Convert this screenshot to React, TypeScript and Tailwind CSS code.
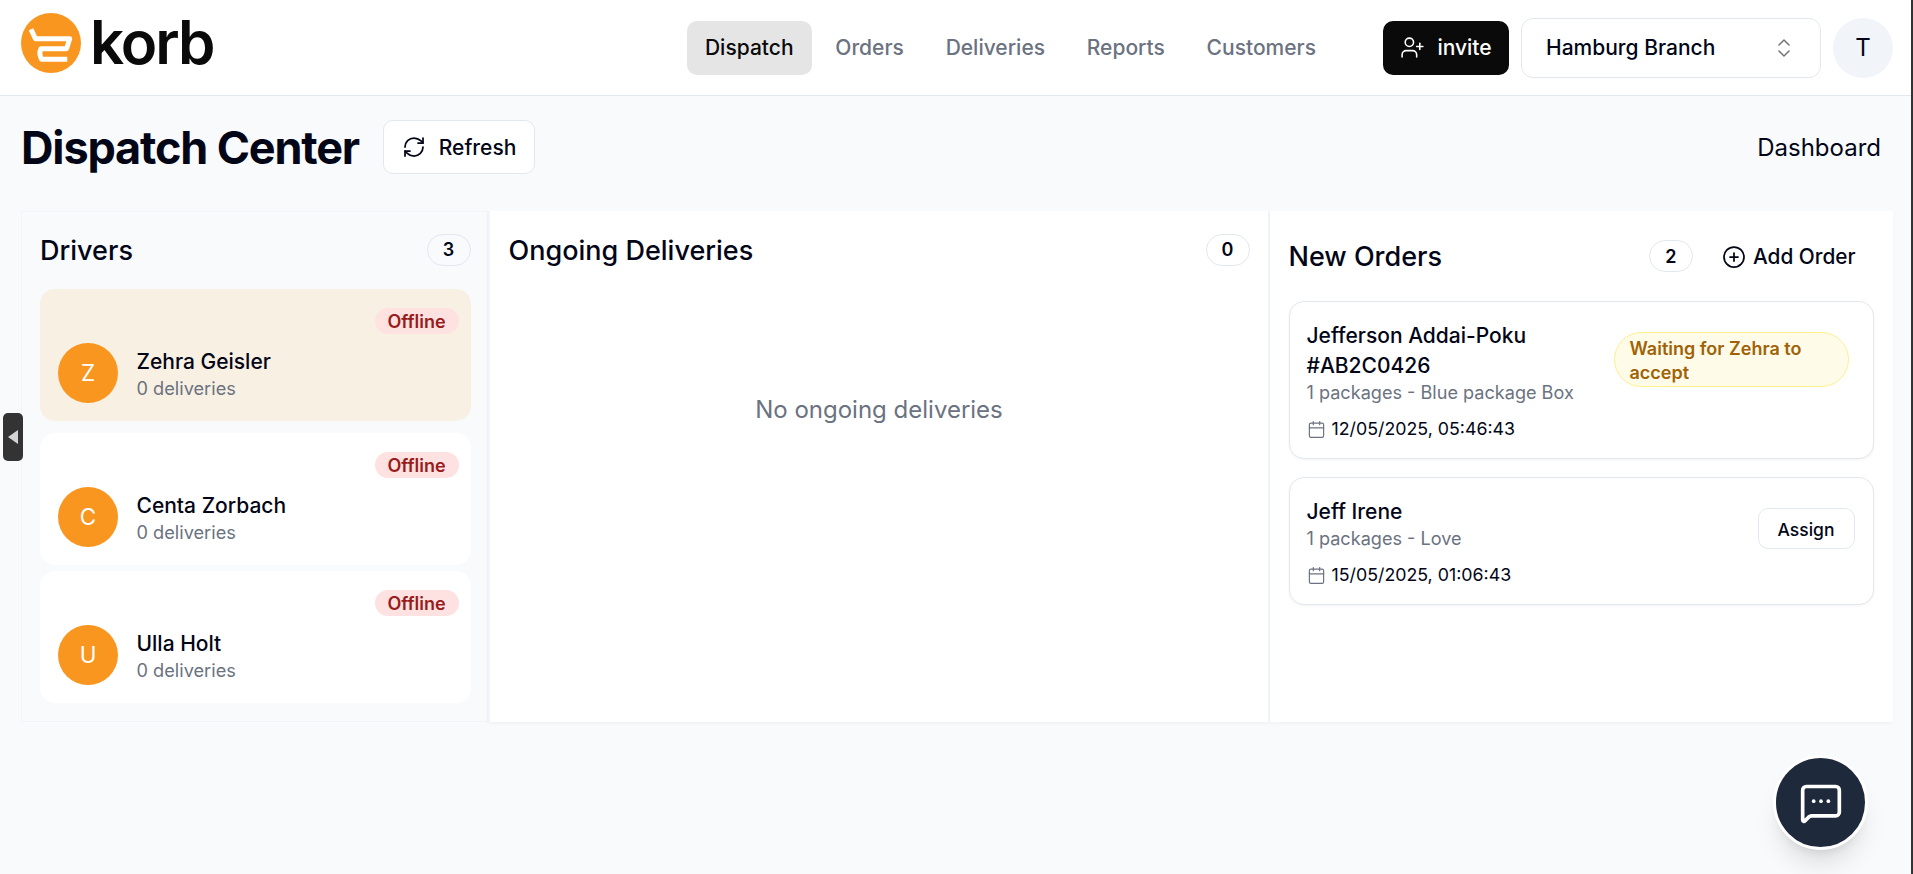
import React from "react";
import { UserPlus, ChevronsUpDown, RefreshCw, CirclePlus, Calendar, MessageSquareMore } from "lucide-react";

const navItems = ["Orders", "Deliveries", "Reports", "Customers"];

function Logo() {
  return (
    <div className="mb-[10px] flex items-center">
      <svg width="60" height="60" viewBox="0 0 192 192">
        <circle cx="96" cy="96" r="96" fill="#f9961f" />
        <path d="M32 52 L46 82 L156 82 L146 114 L64 114 Q56 130 66 148 L148 148" fill="none" stroke="#fff" strokeWidth="16" strokeLinejoin="round" />
      </svg>
      <span className="ml-[9px] mt-[-2px] text-[60px] leading-[60px] font-semibold tracking-[-2px] text-[#0a0a0a]">korb</span>
    </div>
  );
}

function Count({ n }: { n: number }) {
  return (
    <span className="flex h-[32px] w-[44px] items-center justify-center rounded-full border border-[#e2e8f0] text-[18px] font-semibold text-[#020617]">
      {n}
    </span>
  );
}

function Driver({ initial, name, active, className }: { initial: string; name: string; active?: boolean; className?: string }) {
  return (
    <div className={`h-[132px] rounded-[15px] pt-[19px] pl-[18px] pr-[12px] ${active ? "bg-[#f8f0e3]" : "bg-white"} ${className ?? ""}`}>
      <div className="flex justify-end">
        <span className="flex h-[26px] w-[84px] items-center justify-center rounded-full bg-[#fee2e2] pt-[2px] text-[18px] font-semibold text-[#991b1b]">Offline</span>
      </div>
      <div className="mt-[9px] flex items-center">
        <div className="flex h-[60px] w-[60px] items-center justify-center rounded-full bg-[#f9961f] text-[22.5px] text-white">{initial}</div>
        <div className="ml-[18.5px] mt-[2px]">
          <div className="pt-[1.5px] text-[21px] leading-[28px] font-medium text-[#020617]">{name}</div>
          <div className="mt-[-1.5px] text-[18.2px] leading-[26px] text-[#6b7280]">0 deliveries</div>
        </div>
      </div>
    </div>
  );
}

function DateRow({ text }: { text: string }) {
  return (
    <div className="flex h-[24px] items-center text-[17.8px] text-[#020617]">
      <Calendar size={19} strokeWidth={1.5} className="mr-[6px] text-[#6b7280]" />
      {text}
    </div>
  );
}

export default function App() {
  return (
    <div className="flex h-[874px] overflow-hidden bg-[#f8fafc] font-['Inter',sans-serif]">
      <div className="relative min-w-0 flex-1">
        <header className="flex h-[96px] items-center border-b border-[#e2e8f0] bg-white pl-[21px] pr-[18px]">
          <Logo />
          <nav className="ml-auto flex items-center gap-[5.75px] text-[21px] font-medium text-[#6b7280]">
            <span className="flex h-[54px] items-center rounded-[10px] bg-[#e5e5e5] px-[18px] text-[#0a0a0a]">Dispatch</span>
            {navItems.map((n) => (
              <span key={n} className="flex h-[54px] items-center px-[18px]">{n}</span>
            ))}
          </nav>
          <div className="ml-[49px] flex items-center">
            <button className="flex h-[54px] w-[126px] items-center justify-center gap-[12px] rounded-[10px] bg-[#0a0a0a] text-[21px] font-medium text-white">
              <UserPlus size={25} strokeWidth={1.5} />
              invite
            </button>
            <button className="ml-[12px] flex h-[60px] w-[300px] items-center justify-between rounded-[12px] border border-[#e2e8f0] bg-white pl-[24px] pr-[24px] text-[21px] font-medium text-[#020617]">
              Hamburg Branch
              <ChevronsUpDown size={24} strokeWidth={1.5} className="text-[#737373]" />
            </button>
            <div className="ml-[12px] flex h-[60px] w-[60px] items-center justify-center rounded-full bg-[#f1f5f9] text-[24px] text-[#020617]">T</div>
          </div>
        </header>

        <div className="mt-[24px] flex h-[54px] items-center pl-[21px] pr-[30px]">
          <h1 className="mt-[2px] text-[45px] leading-[54px] font-bold tracking-[-1.15px] text-[#020617]">Dispatch Center</h1>
          <button className="ml-[24px] flex h-[54px] w-[152px] items-center justify-center gap-[13px] rounded-[10px] border border-[#e2e8f0] bg-white text-[21px] font-medium text-[#020617]">
            <RefreshCw size={24} strokeWidth={1.75} />
            <span className="mt-[1px]">Refresh</span>
          </button>
          <span className="ml-auto mt-[1px] text-[24px] text-[#020617]">Dashboard</span>
        </div>

        <div className="ml-[21px] mr-[18.5px] mt-[36.5px] flex h-[511px]">
          <section className="w-[467px] border border-[#f1f5f9] pl-[18px] pr-[16.5px] pt-[22px]">
            <div className="flex h-[32px] items-center justify-between">
              <h2 className="mt-[3px] text-[27px] font-medium text-[#020617]">Drivers</h2>
              <Count n={3} />
            </div>
            <div className="mt-[23px]">
              <Driver initial="Z" name="Zehra Geisler" active className="mb-[12px]" />
              <Driver initial="C" name="Centa Zorbach" className="mb-[6px]" />
              <Driver initial="U" name="Ulla Holt" />
            </div>
          </section>

          <section className="w-[781.5px] border-x-[2px] border-[#f1f5f9] bg-white pl-[18.5px] pr-[18px] pt-[23px] shadow-[0_2px_3px_rgba(15,23,42,0.03)]">
            <div className="flex h-[32px] items-center justify-between">
              <h2 className="mt-[3px] text-[27px] font-medium text-[#020617]">Ongoing Deliveries</h2>
              <Count n={0} />
            </div>
            <p className="mt-[128px] text-center text-[24px] leading-[32px] text-[#6b7280]">No ongoing deliveries</p>
          </section>

          <section className="min-w-0 flex-1 bg-white px-[19px] pt-[29.5px] shadow-[0_2px_3px_rgba(15,23,42,0.03)]">
            <div className="flex h-[32px] items-center">
              <h2 className="mt-[3px] text-[27px] font-medium text-[#020617]">New Orders</h2>
              <span className="ml-auto"><Count n={2} /></span>
              <button className="ml-[29px] mr-[18px] mt-[2px] flex items-center gap-[7px] text-[20.8px] font-medium text-[#020617]">
                <CirclePlus size={24} strokeWidth={1.75} />
                Add Order
              </button>
            </div>

            <div className="mt-[28.5px] flex h-[158px] items-start rounded-[15px] border border-[#e2e8f0] bg-white pl-[17px] pr-[24px] pt-[19px] shadow-[0_1px_3px_rgba(15,23,42,0.05)]">
              <div className="min-w-0 flex-1">
                <div className="w-[270px] text-[21px] leading-[30px] font-medium text-[#020617]">Jefferson Addai-Poku #AB2C0426</div>
                <div className="mt-[-1px] text-[18.1px] leading-[24px] text-[#6b7280]">1 packages - Blue package Box</div>
                <div className="mt-[14px]"><DateRow text="12/05/2025, 05:46:43" /></div>
              </div>
              <span className="mt-[11px] w-[235px] rounded-[28px] border border-[#fef08a] bg-[#fefce8] pb-[1px] pl-[15px] pr-[10px] pt-[4px] text-[18px] leading-[24px] font-semibold text-[#a16207]">
                Waiting for Zehra to accept
              </span>
            </div>

            <div className="mt-[18px] flex h-[128px] items-start rounded-[15px] border border-[#e2e8f0] bg-white pl-[17px] pr-[18px] pt-[19px] shadow-[0_1px_3px_rgba(15,23,42,0.05)]">
              <div className="min-w-0 flex-1">
                <div className="text-[21px] leading-[30px] font-medium text-[#020617]">Jeff Irene</div>
                <div className="mt-[-1px] text-[18.1px] leading-[24px] text-[#6b7280]">1 packages - Love</div>
                <div className="mt-[14px]"><DateRow text="15/05/2025, 01:06:43" /></div>
              </div>
              <button className="mt-[11px] flex h-[41px] w-[97px] items-center justify-center rounded-[10px] border border-[#e2e8f0] bg-white pt-[5px] text-[17.5px] font-medium text-[#020617]">Assign</button>
            </div>
          </section>
        </div>

        <button className="absolute left-[3px] top-[413px] flex h-[48px] w-[20px] items-center justify-center rounded-[5px] bg-[#333333]">
          <span className="h-0 w-0 border-y-[7px] border-r-[10px] border-y-transparent border-r-[#d4d4d4]" />
        </button>

        <button className="absolute left-[1773px] top-[755px] flex h-[95px] w-[95px] items-center justify-center rounded-full border-[3px] border-white bg-[#1e293b] text-white shadow-xl">
          <MessageSquareMore size={44} strokeWidth={2} />
        </button>
      </div>
      <div className="w-[2px] bg-[#333333]" />
    </div>
  );
}
